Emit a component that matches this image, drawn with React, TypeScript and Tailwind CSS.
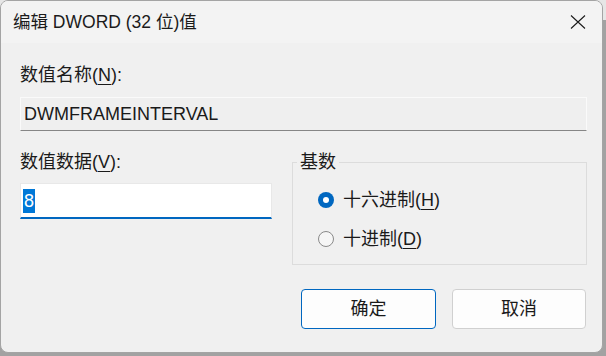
const font = { fontFamily: '"Liberation Sans", "Noto Sans CJK SC", sans-serif' };

function Radio({ checked }: { checked?: boolean }) {
  if (checked) {
    return (
      <span className="flex h-[16px] w-[16px] items-center justify-center rounded-full bg-[#0067c0]">
        <span className="h-[6px] w-[6px] rounded-full bg-white" />
      </span>
    );
  }
  return <span className="h-[16px] w-[16px] rounded-full border border-[#8a8a8a] bg-[#f6f6f6]" />;
}

export default function App() {
  return (
    <div
      className="h-[356px] w-[606px] overflow-hidden bg-[linear-gradient(to_bottom,#e6e6e6_0px,#e6e6e6_20px,#a2a2a2_20px)]"
      style={font}
    >
      <div className="flex h-[353px] w-[603px] flex-col overflow-hidden rounded-[8px] border border-[#a4a4a4] bg-[#f0f0f0] text-[#1a1a1a]">
        {/* title bar */}
        <div className="flex h-[42px] shrink-0 items-center justify-between bg-[#f3f3f3] pl-[12px] pr-[15px]">
          <span className="text-[17.5px] leading-[22px] text-[#1b1b1b]">编辑 DWORD (32 位)值</span>
          <svg width="16" height="16" viewBox="0 0 16 16" className="mr-[1px]">
            <path d="M1 1.5 L15 14.5 M15 1.5 L1 14.5" stroke="#1a1a1a" strokeWidth="1.1" fill="none" />
          </svg>
        </div>

        {/* body */}
        <div className="flex flex-1 flex-col pl-[19px] pr-[15px] pt-[20px] text-[18px] leading-[24px]">
          <div>
            数值名称(<span className="underline underline-offset-[3px]">N</span>):
          </div>
          <div className="mt-[10px] flex h-[34px] items-center border border-[#fafafa] border-b-[#868686] bg-[#efefef] pl-[3px]">
            DWMFRAMEINTERVAL
          </div>

          <div className="mt-[19px] flex gap-[20px]">
            <div className="flex w-[252px] flex-col">
              <div>
                数值数据(<span className="underline underline-offset-[3px]">V</span>):
              </div>
              <div className="mt-[9px] flex h-[36px] items-center border border-[#e8e8e8] border-b-2 border-b-[#0067c0] bg-white pl-[2px]">
                <span className="bg-[#0078d7] px-[1px] leading-[24px] text-white">8</span>
              </div>
            </div>

            <fieldset className="h-[115px] w-[295px] border border-[#dcdcdc] pl-[4px]">
              <legend className="px-[3px] leading-[24px]">基数</legend>
              <div className="flex flex-col gap-[15px] pl-[21px] pt-[14px]">
                <label className="flex items-center gap-[9px]">
                  <Radio checked />
                  <span>
                    十六进制(<span className="underline underline-offset-[3px]">H</span>)
                  </span>
                </label>
                <label className="flex items-center gap-[9px]">
                  <Radio />
                  <span>
                    十进制(<span className="underline underline-offset-[3px]">D</span>)
                  </span>
                </label>
              </div>
            </fieldset>
          </div>

          <div className="mt-[24px] flex justify-end gap-[16px] pr-[1px]">
            <button className="h-[40px] w-[135px] rounded-[4px] border border-[#0067c0] bg-[#fdfdfd] text-[18px]">
              确定
            </button>
            <button className="h-[40px] w-[134px] rounded-[4px] border border-[#d0d0d0] bg-[#fdfdfd] text-[18px]">
              取消
            </button>
          </div>
        </div>
      </div>
    </div>
  );
}
